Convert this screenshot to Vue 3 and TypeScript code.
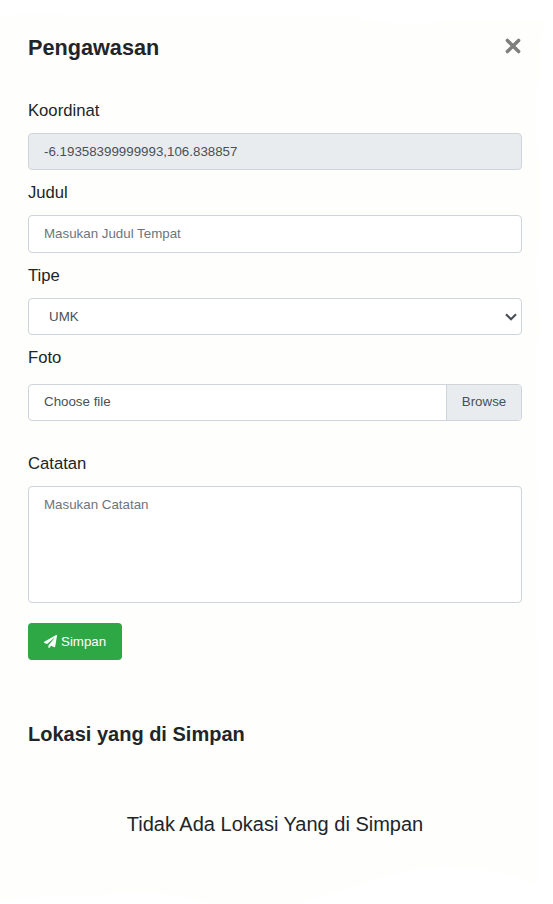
<script setup lang="ts">
import { ref } from 'vue'

const coordinate = ref('-6.19358399999993,106.838857')
const title = ref('')
const type = ref('UMK')
const note = ref('')
</script>

<template>
  <main class="page">
    <svg class="backdrop" viewBox="0 0 553 904" aria-hidden="true">
      <path d="M0 16Q35 12 75 15L150 17L355 17Q385 24 414 24Q440 21 465 21L543 20V33Q540 44 541 64Q537 91 535 112L538 150L540 200L537 270L539 330L535 375L537 450L538 510L535 550L538 660V885Q494 866 443 866Q397 870 359 885Q315 898 300 904H211Q171 892 137 891Q114 892 100 895L0 899Z" />
    </svg>
    <header class="head">
      <h1>Pengawasan</h1>
      <button class="close" type="button" aria-label="Tutup">
        <svg viewBox="0 0 16 16"><path d="M2.4 2.4L13.6 13.6M13.6 2.4L2.4 13.6" /></svg>
      </button>
    </header>
    <form @submit.prevent>
      <div class="group coordinate">
        <label for="koordinat">Koordinat</label>
        <input id="koordinat" v-model="coordinate" class="control" readonly />
      </div>
      <div class="group title">
        <label for="judul">Judul</label>
        <input id="judul" v-model="title" class="control" placeholder="Masukan Judul Tempat" />
      </div>
      <div class="group type">
        <label for="tipe">Tipe</label>
        <div class="select-wrap">
          <select id="tipe" v-model="type" class="control"><option>UMK</option></select>
          <svg class="chevron" viewBox="0 0 12 8"><path d="M1 1.2L6 6.2L11 1.2" /></svg>
        </div>
      </div>
      <div class="group photo">
        <label>Foto</label>
        <div class="file"><span class="name">Choose file</span><span class="browse">Browse</span></div>
      </div>
      <div class="group note">
        <label for="catatan">Catatan</label>
        <textarea id="catatan" v-model="note" class="control" placeholder="Masukan Catatan"></textarea>
      </div>
      <button class="save" type="submit">
        <svg viewBox="0 0 512 512"><path d="M476 3.2L12.500 270.600c-18.100 10.400-15.800 35.600 2.200 43.200L121 358.400l287.300-253.200c5.500-4.900 13.300 2.600 8.600 8.300L176 407v80.500c0 23.600 28.500 32.900 42.500 15.800L282 426l124.600 52.200c14.200 6 30.400-2.900 33-18.200l72-432C515 7.800 493.300-6.800 476 3.200z" /></svg>
        <span>Simpan</span>
      </button>
    </form>
    <section class="saved">
      <h2>Lokasi yang di Simpan</h2>
      <p>Tidak Ada Lokasi Yang di Simpan</p>
    </section>
  </main>
</template>

<style>
body {
  margin: 0;
  background: #fff;
}
</style>

<style scoped>
* {
  box-sizing: border-box;
}
.page {
  position: relative;
  isolation: isolate;
  width: 553px;
  height: 904px;
  padding: 32px 31px 0 28px;
  overflow: hidden;
  color: #212529;
  font-family: "Liberation Sans", Arial, sans-serif;
}
.backdrop {
  position: absolute;
  z-index: -1;
  inset: 0;
  width: 553px;
  height: 904px;
  fill: #fefefc;
}
.head {
  display: flex;
  justify-content: space-between;
  height: 67px;
}
h1, h2, p {
  margin: 0;
}
h1 {
  font-size: 21.67px;
  line-height: 32px;
}
.close {
  width: 16px;
  height: 16px;
  margin: 6px 0.6px 0 0;
  padding: 0;
  border: 0;
  background: none;
}
.close svg {
  display: block;
  width: 16px;
  height: 16px;
  fill: none;
  stroke: #7f7f7f;
  stroke-width: 3.5;
  stroke-linecap: round;
}
.group {
  display: flex;
  flex-direction: column;
}
.coordinate, .type {
  height: 82px;
}
.title {
  height: 83px;
}
.photo {
  height: 106px;
}
.note {
  height: 171px;
}
label {
  display: block;
  height: 34px;
  flex: none;
  font-size: 16.67px;
  line-height: 24px;
}
.control {
  display: block;
  width: 494px;
  height: 37px;
  margin: 0;
  padding: 0 15px;
  border: 1px solid #ced4da;
  border-radius: 4px;
  outline: 0;
  background: #fff;
  color: #495057;
  font: 13.33px "Liberation Sans", Arial, sans-serif;
}
.control::placeholder {
  color: #6c757d;
  opacity: 1;
}
.control[readonly] {
  background: #e9ecef;
}
.title .control {
  height: 38px;
  padding-bottom: 2px;
}
.select-wrap {
  position: relative;
}
select.control {
  appearance: none;
  padding-left: 20px;
}
.chevron {
  position: absolute;
  top: 15px;
  right: 5px;
  width: 12px;
  height: 8px;
  fill: none;
  stroke: #495057;
  stroke-width: 2.2;
}
.photo label {
  height: 38px;
}
.file {
  display: flex;
  width: 494px;
  height: 37px;
  overflow: hidden;
  border: 1px solid #ced4da;
  border-radius: 4px;
  background: #fff;
  color: #495057;
  font-size: 13.33px;
  line-height: 34px;
}
.name {
  flex: 1;
  padding-left: 15px;
}
.browse {
  width: 75px;
  border-left: 1px solid #ced4da;
  background: #e9ecef;
  text-align: center;
}
textarea.control {
  height: 117px;
  padding-top: 10px;
  resize: none;
}
.save {
  display: flex;
  align-items: center;
  gap: 4px;
  width: 94px;
  height: 37px;
  margin: 0;
  padding: 0 0 0 16px;
  border: 0;
  border-radius: 4px;
  background: #2ea745;
  color: #fff;
  font: 13.33px "Liberation Sans", Arial, sans-serif;
}
.save svg {
  width: 13px;
  height: 13px;
  fill: #fff;
}
.saved {
  padding-top: 62px;
}
h2 {
  font-size: 20px;
  line-height: 24px;
}
p {
  padding-top: 66px;
  font-size: 20px;
  line-height: 24px;
  text-align: center;
}
</style>
